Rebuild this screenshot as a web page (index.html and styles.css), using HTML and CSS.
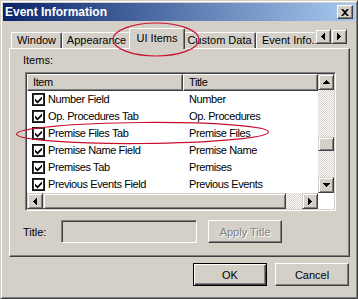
FILE: index.html
```html
<!DOCTYPE html>
<html>
<head>
<meta charset="utf-8">
<link rel="stylesheet" href="styles.css">
</head>
<body>
<div class="screen">
  <div class="window">
    <div class="titlebar">
      <span class="title">Event Information</span>
      <span class="close-btn"><svg width="8" height="7" viewBox="0 0 8 7"><path d="M0 0h2l2 2 2-2h2L5 3.5 8 7H6L4 5 2 7H0l3-3.5z" fill="#000"/></svg></span>
    </div>
    <div class="body">
      <div class="tabstrip">
        <div class="tab t-window">Window</div>
        <div class="tab t-appearance">Appearance</div>
        <div class="tab active t-ui">UI Items</div>
        <div class="tab t-custom">Custom Data</div>
        <div class="tab t-event">Event Info.</div>
        <div class="tab-arrows">
          <span class="sbtn tarrow"><svg width="4" height="7" viewBox="0 0 4 7"><path d="M3 0h1v7H3V6H2V5H1V4H0V3h1V2h1V1h1z" fill="#000"/></svg></span>
          <span class="sbtn tarrow"><svg width="4" height="7" viewBox="0 0 4 7"><path d="M0 0h1v1h1v1h1v1h1v1H3v1H2v1H1v1H0z" fill="#000"/></svg></span>
        </div>
      </div>
      <div class="panel">
        <div class="label items-label">Items:</div>
        <div class="list">
          <div class="lv">
            <div class="lv-header">
              <div class="hcell c1">Item</div>
              <div class="hcell c2">Title</div>
            </div>
            <div class="row"><span class="c1"><svg class="cb" width="13" height="13" viewBox="0 0 13 13"><rect x="0.5" y="0.5" width="12" height="12" fill="#fff" stroke="#111"/><rect x="1.5" y="1.5" width="10" height="10" fill="none" stroke="#333"/><path d="M3 5.5 5.5 8 10 3.5V6L5.5 10.5 3 8z" fill="#000"/></svg>Number Field</span><span class="c2">Number</span></div>
            <div class="row"><span class="c1"><svg class="cb" width="13" height="13" viewBox="0 0 13 13"><rect x="0.5" y="0.5" width="12" height="12" fill="#fff" stroke="#111"/><rect x="1.5" y="1.5" width="10" height="10" fill="none" stroke="#333"/><path d="M3 5.5 5.5 8 10 3.5V6L5.5 10.5 3 8z" fill="#000"/></svg>Op. Procedures Tab</span><span class="c2">Op. Procedures</span></div>
            <div class="row"><span class="c1"><svg class="cb" width="13" height="13" viewBox="0 0 13 13"><rect x="0.5" y="0.5" width="12" height="12" fill="#fff" stroke="#111"/><rect x="1.5" y="1.5" width="10" height="10" fill="none" stroke="#333"/><path d="M3 5.5 5.5 8 10 3.5V6L5.5 10.5 3 8z" fill="#000"/></svg>Premise Files Tab</span><span class="c2">Premise Files</span></div>
            <div class="row"><span class="c1"><svg class="cb" width="13" height="13" viewBox="0 0 13 13"><rect x="0.5" y="0.5" width="12" height="12" fill="#fff" stroke="#111"/><rect x="1.5" y="1.5" width="10" height="10" fill="none" stroke="#333"/><path d="M3 5.5 5.5 8 10 3.5V6L5.5 10.5 3 8z" fill="#000"/></svg>Premise Name Field</span><span class="c2">Premise Name</span></div>
            <div class="row"><span class="c1"><svg class="cb" width="13" height="13" viewBox="0 0 13 13"><rect x="0.5" y="0.5" width="12" height="12" fill="#fff" stroke="#111"/><rect x="1.5" y="1.5" width="10" height="10" fill="none" stroke="#333"/><path d="M3 5.5 5.5 8 10 3.5V6L5.5 10.5 3 8z" fill="#000"/></svg>Premises Tab</span><span class="c2">Premises</span></div>
            <div class="row"><span class="c1"><svg class="cb" width="13" height="13" viewBox="0 0 13 13"><rect x="0.5" y="0.5" width="12" height="12" fill="#fff" stroke="#111"/><rect x="1.5" y="1.5" width="10" height="10" fill="none" stroke="#333"/><path d="M3 5.5 5.5 8 10 3.5V6L5.5 10.5 3 8z" fill="#000"/></svg>Previous Events Field</span><span class="c2">Previous Events</span></div>
          </div>
          <div class="vscroll">
            <span class="sbtn"><svg width="7" height="4" viewBox="0 0 7 4"><path d="M3 0h1v1h1v1h1v1h1v1H0V3h1V2h1V1h1z" fill="#000"/></svg></span>
            <div class="vtrack"><span class="thumb vthumb"></span></div>
            <span class="sbtn"><svg width="7" height="4" viewBox="0 0 7 4"><path d="M0 0h7v1H6v1H5v1H4v1H3V3H2V2H1V1H0z" fill="#000"/></svg></span>
          </div>
          <div class="hscroll">
            <span class="sbtn"><svg width="4" height="7" viewBox="0 0 4 7"><path d="M3 0h1v7H3V6H2V5H1V4H0V3h1V2h1V1h1z" fill="#000"/></svg></span>
            <span class="thumb hthumb"></span>
            <div class="htrack"></div>
            <span class="sbtn"><svg width="4" height="7" viewBox="0 0 4 7"><path d="M0 0h1v1h1v1h1v1h1v1H3v1H2v1H1v1H0z" fill="#000"/></svg></span>
          </div>
          <div class="corner"></div>
        </div>
        <div class="title-row">
          <span class="label title-label">Title:</span>
          <span class="edit"></span>
          <span class="btn disabled apply">Apply Title</span>
        </div>
      </div>
      <div class="buttons">
        <span class="btn default">OK</span>
        <span class="btn">Cancel</span>
      </div>
    </div>
  </div>
  <svg class="annot" width="358" height="299" viewBox="0 0 358 299">
    <ellipse cx="156" cy="39.5" rx="43" ry="16.5" fill="none" stroke="#c8102e" stroke-width="1.2"/>
    <ellipse cx="142.5" cy="133" rx="126" ry="10.5" fill="none" stroke="#c8102e" stroke-width="1.2" transform="rotate(-0.5 142.5 133)"/>
  </svg>
</div>
</body>
</html>
```
FILE: styles.css
```css
* { box-sizing: border-box; }
html, body { margin: 0; padding: 0; }
body {
  width: 358px;
  height: 299px;
  overflow: hidden;
  background: #D4D0C8;
  font-family: "Liberation Sans", Arial, sans-serif;
  font-size: 11px;
  color: #000;
}
.screen { position: relative; width: 358px; height: 299px; }
.window {
  width: 358px;
  height: 299px;
  background: #D4D0C8;
  border: 1px solid;
  border-color: #D4D0C8 #404040 #404040 #D4D0C8;
  box-shadow: inset 1px 1px #fff, inset -1px -1px #808080;
  padding: 2px;
  display: flex;
  flex-direction: column;
}
.titlebar {
  height: 18px;
  flex: none;
  display: flex;
  align-items: center;
  justify-content: space-between;
  background: linear-gradient(to right, #0A246A, #A6CAF0);
  padding: 0 2px 0 2px;
}
.title {
  color: #fff;
  font-weight: bold;
  font-size: 12px;
  line-height: 18px;
}
.close-btn {
  width: 16px;
  height: 14px;
  display: flex;
  align-items: center;
  justify-content: center;
  background: #D4D0C8;
  border: 1px solid;
  border-color: #fff #404040 #404040 #fff;
  box-shadow: inset -1px -1px #808080;
}
.body {
  flex: 1;
  display: flex;
  flex-direction: column;
  padding: 7px 5px 0 6px;
}
.tabstrip {
  height: 20px;
  display: flex;
  align-items: flex-end;
  padding: 0 3px 0 2px;
}
.tab {
  height: 16px;
  line-height: 15px;
  text-align: center;
  white-space: nowrap;
  overflow: hidden;
  border-top: 1px solid #fff;
  border-left: 1px solid #fff;
  border-right: 1px solid #404040;
  box-shadow: inset -1px 0 #808080;
  border-radius: 2px 2px 0 0;
}
.t-window { width: 51px; }
.t-appearance { width: 69px; }
.t-custom { width: 73px; }
.t-event { width: 59px; border-right: none; box-shadow: none; text-align: left; padding-left: 5px; }
.tab.active {
  position: relative;
  z-index: 1;
  width: 56px;
  height: 21px;
  line-height: 19px;
  margin: 0 -2px -1px -2px;
  background: #D4D0C8;
}
.tab-arrows {
  display: flex;
  margin-bottom: 4px;
}
.sbtn {
  width: 16px;
  height: 16px;
  flex: none;
  display: flex;
  align-items: center;
  justify-content: center;
  background: #D4D0C8;
  border: 1px solid;
  border-color: #D4D0C8 #404040 #404040 #D4D0C8;
  box-shadow: inset 1px 1px #fff, inset -1px -1px #808080;
}
.tarrow { height: 15px; }
.panel {
  height: 209px;
  flex: none;
  border: 1px solid;
  border-color: #fff #404040 #404040 #fff;
  box-shadow: inset -1px -1px #808080;
  padding: 4px 0 0 13px;
  display: flex;
  flex-direction: column;
}
.label { line-height: 14px; height: 14px; }
.list {
  margin: 5px 0 0 2px;
  width: 311px;
  height: 139px;
  border: 1px solid;
  border-color: #808080 #fff #fff #808080;
  box-shadow: inset 1px 1px #404040, inset -1px -1px #D4D0C8;
  padding: 1px;
  display: grid;
  grid-template-columns: 291px 16px;
  grid-template-rows: 119px 16px;
  background: #fff;
}
.lv { overflow: hidden; background: #fff; letter-spacing: -0.4px; }
.lv-header { display: flex; height: 17px; }
.hcell {
  height: 17px;
  line-height: 15px;
  background: #D4D0C8;
  border: 1px solid;
  border-color: #fff #404040 #404040 #fff;
  box-shadow: inset -1px -1px #808080;
  padding-left: 5px;
}
.hcell.c1 { width: 156px; flex: none; }
.hcell.c2 { flex: 1; }
.row { display: flex; height: 17px; line-height: 17px; white-space: nowrap; }
.row .c1 { width: 156px; flex: none; display: flex; align-items: center; padding-left: 5px; }
.row .c2 { padding-left: 6px; }
.cb { flex: none; margin-right: 3px; }
.vscroll { display: flex; flex-direction: column; }
.vtrack {
  flex: 1;
  padding-top: 47px;
  background: repeating-conic-gradient(#fff 0 25%, #D4D0C8 0 50%) 0 0 / 2px 2px;
}
.thumb {
  display: block;
  background: #D4D0C8;
  border: 1px solid;
  border-color: #D4D0C8 #404040 #404040 #D4D0C8;
  box-shadow: inset 1px 1px #fff, inset -1px -1px #808080;
}
.vthumb { width: 16px; height: 14px; }
.hscroll { display: flex; }
.hthumb { width: 243px; height: 16px; flex: none; }
.htrack {
  flex: 1;
  background: repeating-conic-gradient(#fff 0 25%, #D4D0C8 0 50%) 0 0 / 2px 2px;
}
.corner { background: #fff; }
.title-row {
  display: flex;
  align-items: center;
  margin-top: 9px;
  height: 23px;
}
.title-label { width: 38px; flex: none; }
.edit {
  width: 136px;
  height: 23px;
  border: 1px solid;
  border-color: #808080 #fff #fff #808080;
  box-shadow: inset 1px 1px #404040, inset -1px -1px #D4D0C8;
  margin-right: 11px;
}
.btn {
  width: 74px;
  height: 23px;
  display: flex;
  align-items: center;
  justify-content: center;
  background: #D4D0C8;
  border: 1px solid;
  border-color: #fff #404040 #404040 #fff;
  box-shadow: inset -1px -1px #808080;
}
.btn.disabled { color: #808080; text-shadow: 1px 1px #fff; }
.btn.default {
  border: 1px solid #000;
  box-shadow: inset 1px 1px #fff, inset -1px -1px #404040, inset -2px -2px #808080;
}
.buttons {
  display: flex;
  justify-content: flex-end;
  gap: 8px;
  margin-top: 6px;
  padding-right: 1px;
}
.annot { position: absolute; left: 0; top: 0; pointer-events: none; }
```
